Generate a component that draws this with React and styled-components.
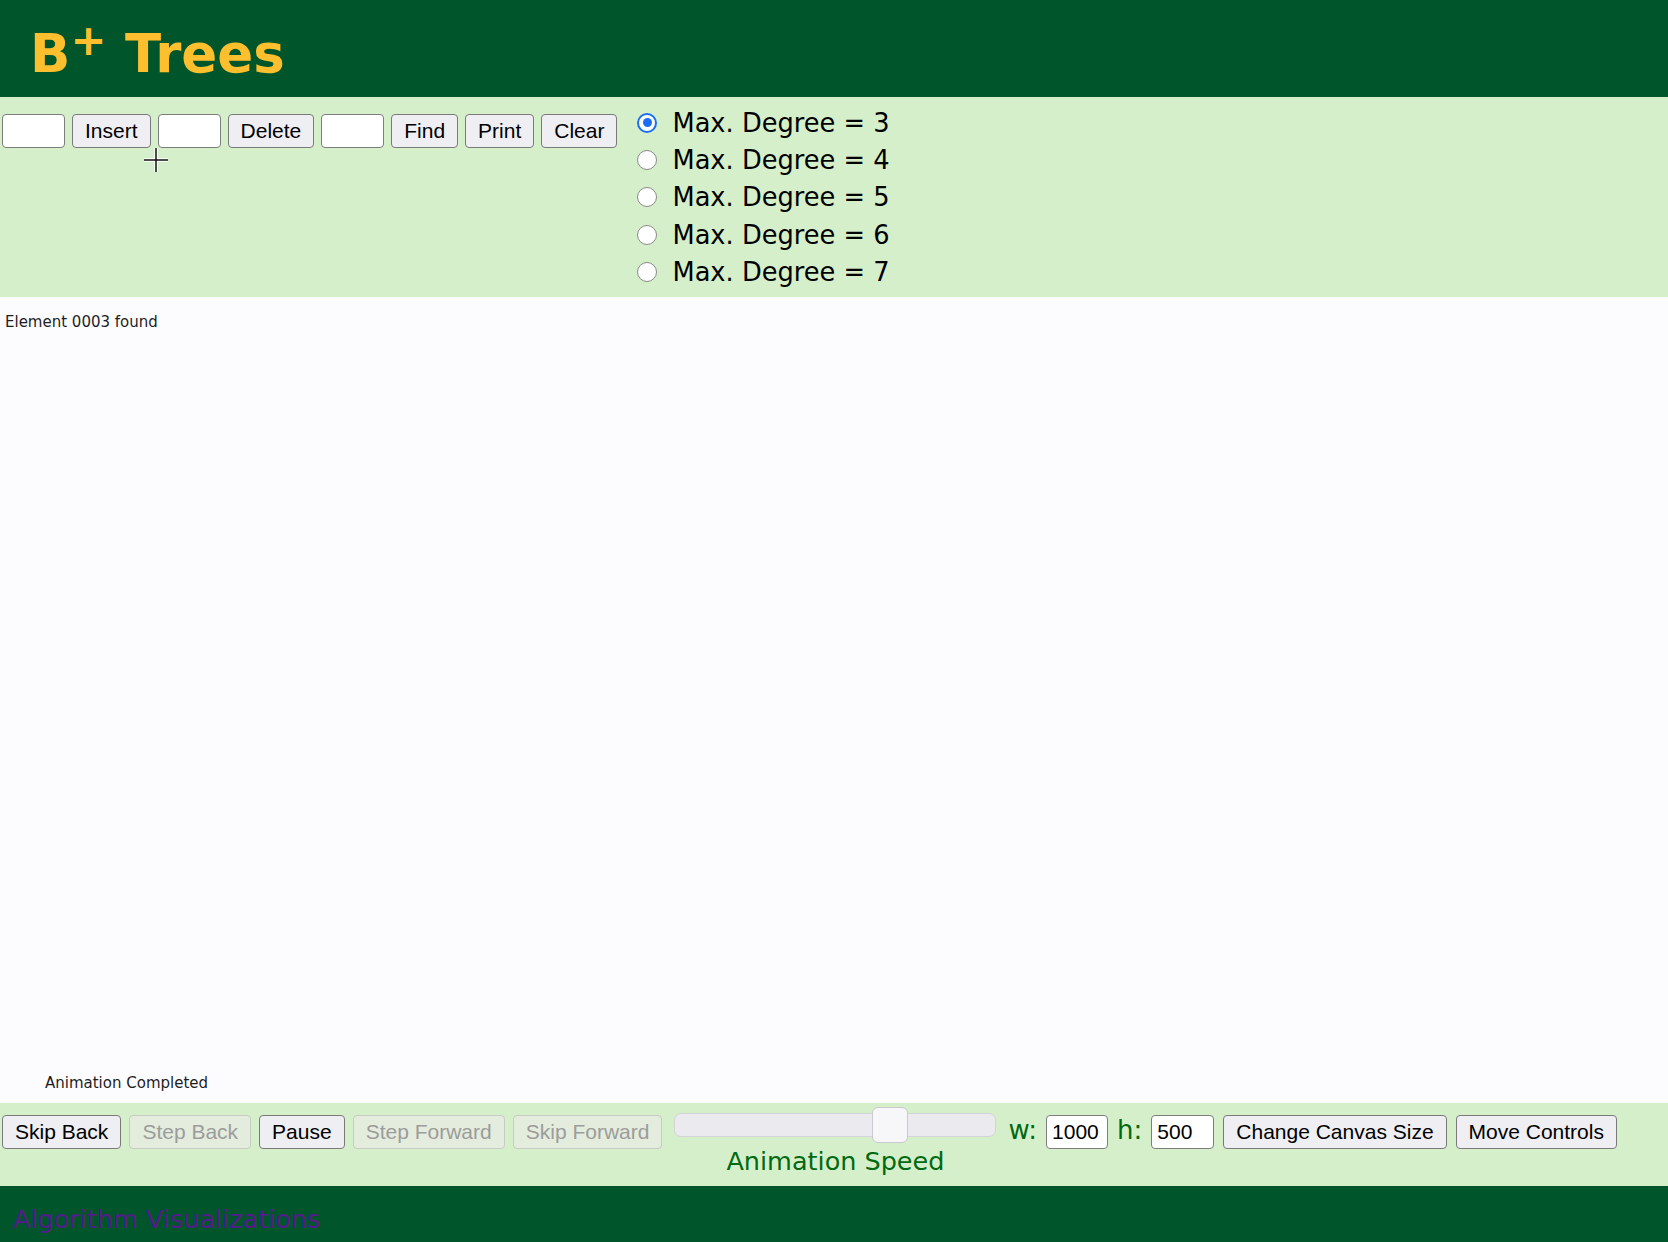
import React, { useState } from "react";
import styled, { createGlobalStyle } from "styled-components";

const GlobalStyle = createGlobalStyle`
  html, body {
    margin: 0;
    padding: 0;
    background: #fbfbfe;
  }
  * {
    box-sizing: border-box;
  }
`;

const Page = styled.div`
  width: 1668px;
  height: 1242px;
  display: flex;
  flex-direction: column;
  overflow: hidden;
`;

const Header = styled.header`
  height: 97px;
  flex: none;
  background: #00562a;
  padding: 27px 0 0 30px;
`;

const Title = styled.h1`
  margin: 0;
  font-family: "DejaVu Sans", Verdana, sans-serif;
  font-weight: bold;
  font-size: 53px;
  line-height: 53px;
  color: #fdbf2d;
  white-space: nowrap;
`;

const Sup = styled.sup`
  font-size: 43px;
  line-height: 0;
  vertical-align: 17px;
`;

const ControlPanel = styled.section`
  position: relative;
  height: 200px;
  flex: none;
  background: #d6efcb;
  display: flex;
  align-items: flex-start;
  padding-left: 2px;
`;

const ControlGroup = styled.div`
  display: flex;
  align-items: center;
  gap: ${(props) => props.gap || 7}px;
  margin-top: ${(props) => props.top || 0}px;
  margin-left: ${(props) => props.left || 0}px;
`;

const TextField = styled.input`
  width: ${(props) => props.w || 63}px;
  height: 34px;
  background: #fff;
  border: 1px solid #7d7d7d;
  border-radius: 4px;
  padding: 0 5px;
  font-family: "Liberation Sans", Arial, sans-serif;
  font-size: 21px;
  color: #000;
  outline: none;
`;

const Button = styled.button`
  height: 34px;
  padding: 0 12px;
  background: ${(props) => (props.disabled ? "#e3ecdd" : "#eeeef3")};
  border: 1px solid ${(props) => (props.disabled ? "#c6cbc3" : "#7a7a7a")};
  border-radius: 4px;
  font-family: "Liberation Sans", Arial, sans-serif;
  font-size: 21px;
  color: ${(props) => (props.disabled ? "#9c9c9c" : "#000")};
  white-space: nowrap;
  cursor: pointer;
`;

const RadioList = styled.div`
  display: flex;
  flex-direction: column;
  margin-top: 7px;
  margin-left: 20px;
`;

const RadioRow = styled.label`
  display: flex;
  align-items: center;
  height: 37.4px;
  font-family: "DejaVu Sans", Verdana, sans-serif;
  font-size: 25.7px;
  color: #000;
  cursor: pointer;
`;

const Radio = styled.input`
  appearance: none;
  margin: 0 15px 0 0;
  width: 20px;
  height: 20px;
  border-radius: 50%;
  background: #fff;
  border: 1px solid #8a8a8a;
  display: grid;
  place-items: center;

  &:checked {
    border: 2.5px solid #1b6ef3;
  }
  &:checked::after {
    content: "";
    width: 9px;
    height: 9px;
    border-radius: 50%;
    background: #1b6ef3;
  }
`;

const Crosshair = styled.svg`
  position: absolute;
  left: 143px;
  top: 50px;
`;

const Canvas = styled.main`
  flex: 1;
  background: #fcfcff;
  display: flex;
  flex-direction: column;
  justify-content: space-between;
  padding: 17px 0 11px 0;
`;

const CanvasText = styled.div`
  font-family: "DejaVu Sans", Verdana, sans-serif;
  font-size: 15px;
  line-height: 17.4px;
  color: #1e1e1e;
  padding-left: ${(props) => props.indent || 5}px;
`;

const AnimPanel = styled.section`
  height: 83px;
  flex: none;
  background: #d6efcb;
  display: flex;
  align-items: flex-start;
  gap: 8px;
  padding-left: 2px;
`;

const SpeedBox = styled.div`
  display: flex;
  flex-direction: column;
  align-items: center;
  margin: 4px 4px 0 4px;
`;

const Track = styled.div`
  width: 322px;
  height: 36px;
  display: flex;
  align-items: center;
  position: relative;
`;

const TrackBar = styled.div`
  flex: 1;
  height: 24px;
  background: #ebebef;
  border: 1px solid #d3d3d8;
  border-radius: 7px;
`;

const Thumb = styled.div`
  position: absolute;
  top: 0;
  width: 36px;
  height: 36px;
  background: #f7f7fa;
  border: 1px solid #c9c9cf;
  border-radius: 6px;
`;

const SpeedLabel = styled.div`
  margin-top: 3px;
  font-family: "DejaVu Sans", Verdana, sans-serif;
  font-size: 25.5px;
  line-height: 30px;
  color: #006a12;
  white-space: nowrap;
`;

const SizeLabel = styled.span`
  font-family: "DejaVu Sans", Verdana, sans-serif;
  font-size: 26px;
  color: #006a12;
  margin-top: -4px;
`;

const Footer = styled.footer`
  height: 56px;
  flex: none;
  background: #00562a;
  display: flex;
  align-items: center;
  padding: 10px 0 0 13px;
`;

const FooterLink = styled.a`
  font-family: "DejaVu Sans", Verdana, sans-serif;
  font-size: 25.5px;
  color: #551a8b;
  text-decoration: none;
`;

const degrees = [3, 4, 5, 6, 7];

export default function App() {
  const [degree, setDegree] = useState(3);
  const speed = 0.615;

  return (
    <Page>
      <GlobalStyle />
      <Header>
        <Title>
          B<Sup>+</Sup> Trees
        </Title>
      </Header>

      <ControlPanel>
        <ControlGroup top={17}>
          <TextField />
          <Button>Insert</Button>
          <TextField />
          <Button>Delete</Button>
          <TextField />
          <Button>Find</Button>
          <Button>Print</Button>
          <Button>Clear</Button>
        </ControlGroup>
        <RadioList>
          {degrees.map((d) => (
            <RadioRow key={d}>
              <Radio
                type="radio"
                name="degree"
                checked={degree === d}
                onChange={() => setDegree(d)}
              />
              Max. Degree = {d}
            </RadioRow>
          ))}
        </RadioList>
        <Crosshair width="26" height="26" viewBox="0 0 26 26">
          <path d="M13 1v24M1 13h24" stroke="#fff" strokeWidth="3.5" />
          <path d="M13 1v24M1 13h24" stroke="#111" strokeWidth="1.5" />
        </Crosshair>
      </ControlPanel>

      <Canvas>
        <CanvasText>Element 0003 found</CanvasText>
        <CanvasText indent={45}>Animation Completed</CanvasText>
      </Canvas>

      <AnimPanel>
        <ControlGroup top={12} gap={8}>
          <Button>Skip Back</Button>
          <Button disabled>Step Back</Button>
          <Button>Pause</Button>
          <Button disabled>Step Forward</Button>
          <Button disabled>Skip Forward</Button>
        </ControlGroup>
        <SpeedBox>
          <Track>
            <TrackBar />
            <Thumb style={{ left: `${speed * 322}px` }} />
          </Track>
          <SpeedLabel>Animation Speed</SpeedLabel>
        </SpeedBox>
        <ControlGroup top={12} gap={9}>
          <SizeLabel>w:</SizeLabel>
          <TextField w={62} defaultValue="1000" />
          <SizeLabel>h:</SizeLabel>
          <TextField w={63} defaultValue="500" />
          <Button>Change Canvas Size</Button>
          <Button>Move Controls</Button>
        </ControlGroup>
      </AnimPanel>

      <Footer>
        <FooterLink href="#">Algorithm Visualizations</FooterLink>
      </Footer>
    </Page>
  );
}
